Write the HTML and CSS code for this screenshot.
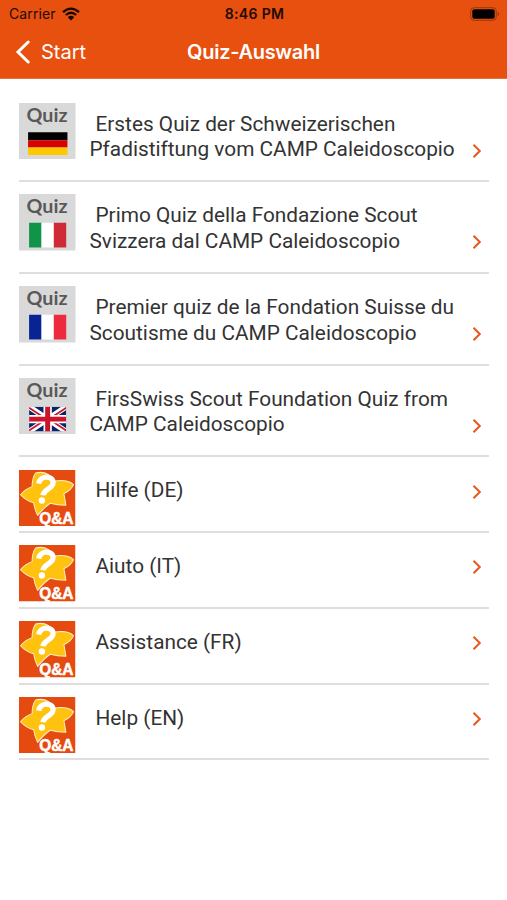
FILE: index.html
```html
<!DOCTYPE html>
<html lang="de">
<head>
<meta charset="utf-8">
<title>Quiz-Auswahl</title>
<link rel="stylesheet" href="styles.css">
</head>
<body>
<svg class="defs" aria-hidden="true">
  <symbol id="chevron" viewBox="0 0 10 16"><path d="M1.500 1.800 L7.800 8 L1.500 14.200" fill="none" stroke="#e8581c" stroke-width="2"/></symbol>
  <symbol id="qa" viewBox="0 0 56 56">
    <rect width="56" height="56" fill="#e54b10"/>
    <path d="M16.500 3 Q28 0 35.500 11 Q48 9 54 14.500 Q52 20 44.500 23.500 Q45.500 29 46.500 35 Q38 35 31 33 Q25 37 18.500 45 Q15.500 39 14.500 32.500 Q7 30.500 1.500 24.500 Q6 19 13 16.500 Q13 8 16.500 3Z" fill="#ffc20e" stroke="#fff0c4" stroke-width="1" stroke-linejoin="round"/>
    <path d="M19.500 13.500 C20.500 5 33.800 5 33.800 12.500 C33.800 19 24.500 18.500 23.800 25" fill="none" stroke="#fff" stroke-width="5.200"/>
    <circle cx="22.700" cy="30.300" r="3.200" fill="#fff"/>
  </symbol>
</svg>
<header class="top">
  <div class="status">
    <div class="carrier">Carrier
      <svg class="wifi" viewBox="0 0 18 14"><path d="M1 5.200 Q9 -2 17 5.200 M3.800 8 Q9 3.400 14.200 8" fill="none" stroke="currentColor" stroke-width="2.300"/><path d="M5.800 10.200 Q9 7.400 12.200 10.200 L9 13.500Z" fill="currentColor"/></svg>
    </div>
    <div class="clock">8:46 PM</div>
    <svg class="battery" viewBox="0 0 30 14"><rect x=".7" y=".7" width="25.600" height="12.600" rx="3.500" fill="none" stroke="#9b350d"/><rect x="2.300" y="2.300" width="22.400" height="9.400" rx="2" fill="#000"/><path d="M27.700 4.700 Q30.500 7 27.700 9.300Z" fill="#9b350d"/></svg>
  </div>
  <nav class="nav">
    <a class="back"><svg class="back-icon" viewBox="0 0 16 24"><path d="M13.200 2 L3 12 L13.200 22" fill="none" stroke="#fff" stroke-width="3" stroke-linecap="round"/></svg><span class="back-label">Start</span></a>
    <h1 class="title">Quiz-Auswahl</h1>
    <span></span>
  </nav>
</header>
<main class="list">
  <a class="row quiz">
    <svg class="thumb" viewBox="0 0 56 56"><rect width="56" height="56" fill="#d9d9d9"/><text class="quiz-label" x="7.500" y="18.700" textLength="40.500">Quiz</text><path fill="#000" d="M9 29h39v8H9z"/><path fill="#d90000" d="M9 37h39v7H9z"/><path fill="#ffc800" d="M9 44h39v7.500H9z"/></svg>
    <div class="label"><span class="line first">Erstes Quiz der Schweizerischen</span><span class="line">Pfadistiftung vom CAMP Caleidoscopio</span></div>
    <svg class="chev"><use href="#chevron"/></svg>
  </a>
  <a class="row quiz">
    <svg class="thumb" viewBox="0 0 56 56"><rect width="56" height="56" fill="#d9d9d9"/><text class="quiz-label" x="7.500" y="18.700" textLength="40.500">Quiz</text><path fill="#109447" d="M10 28.500h12.300v24.500H10z"/><path fill="#fff" d="M22.300 28.500h12.200v24.500H22.300z"/><path fill="#ce2b37" d="M34.500 28.500h12.300v24.500H34.500z"/></svg>
    <div class="label"><span class="line first">Primo Quiz della Fondazione Scout</span><span class="line">Svizzera dal CAMP Caleidoscopio</span></div>
    <svg class="chev"><use href="#chevron"/></svg>
  </a>
  <a class="row quiz">
    <svg class="thumb" viewBox="0 0 56 56"><rect width="56" height="56" fill="#d9d9d9"/><text class="quiz-label" x="7.500" y="18.700" textLength="40.500">Quiz</text><path fill="#082494" d="M10 28.500h12.300v24.500H10z"/><path fill="#fff" d="M22.300 28.500h12.200v24.500H22.300z"/><path fill="#ed2b3c" d="M34.500 28.500h12.300v24.500H34.500z"/></svg>
    <div class="label"><span class="line first">Premier quiz de la Fondation Suisse du</span><span class="line">Scoutisme du CAMP Caleidoscopio</span></div>
    <svg class="chev"><use href="#chevron"/></svg>
  </a>
  <a class="row quiz">
    <svg class="thumb" viewBox="0 0 56 56"><rect width="56" height="56" fill="#d9d9d9"/><text class="quiz-label" x="7.500" y="18.700" textLength="40.500">Quiz</text>
      <svg x="10" y="28.500" width="36.800" height="24.500" viewBox="0 0 60 40" preserveAspectRatio="none"><rect width="60" height="40" fill="#08246b"/><path d="M0 0L60 40M60 0L0 40" stroke="#fff" stroke-width="9"/><path d="M0 1.500L30 21.500M30 18.500L60 38.500M60 1.500L30 21.500M30 18.500L0 38.500" stroke="#cc142b" stroke-width="2.800"/><path d="M30 0V40M0 20H60" stroke="#fff" stroke-width="13.500"/><path d="M30 0V40M0 20H60" stroke="#cc142b" stroke-width="8"/></svg>
    </svg>
    <div class="label"><span class="line first">FirsSwiss Scout Foundation Quiz from</span><span class="line">CAMP Caleidoscopio</span></div>
    <svg class="chev"><use href="#chevron"/></svg>
  </a>
  <a class="row help"><svg class="thumb" viewBox="0 0 56 56"><use href="#qa"/><text class="qa-label" x="20" y="53.500" textLength="34" lengthAdjust="spacingAndGlyphs">Q&amp;A</text></svg><div class="label"><span class="line first">Hilfe (DE)</span></div><svg class="chev"><use href="#chevron"/></svg></a>
  <a class="row help"><svg class="thumb" viewBox="0 0 56 56"><use href="#qa"/><text class="qa-label" x="20" y="53.500" textLength="34" lengthAdjust="spacingAndGlyphs">Q&amp;A</text></svg><div class="label"><span class="line first">Aiuto (IT)</span></div><svg class="chev"><use href="#chevron"/></svg></a>
  <a class="row help"><svg class="thumb" viewBox="0 0 56 56"><use href="#qa"/><text class="qa-label" x="20" y="53.500" textLength="34" lengthAdjust="spacingAndGlyphs">Q&amp;A</text></svg><div class="label"><span class="line first">Assistance (FR)</span></div><svg class="chev"><use href="#chevron"/></svg></a>
  <a class="row help"><svg class="thumb" viewBox="0 0 56 56"><use href="#qa"/><text class="qa-label" x="20" y="53.500" textLength="34" lengthAdjust="spacingAndGlyphs">Q&amp;A</text></svg><div class="label"><span class="line first">Help (EN)</span></div><svg class="chev"><use href="#chevron"/></svg></a>
</main>
</body>
</html>
```
FILE: styles.css
```css
* { box-sizing: border-box; }
body { margin: 0; background: #fff; font-family: Roboto, sans-serif; color: #333; }
.defs { display: block; width: 0; height: 0; }
.top { height: 79px; background: #e8500f; border-bottom: 1px solid #e9733f; font-family: Inter, sans-serif; }
.status { display: grid; grid-template-columns: 1fr auto 1fr; align-items: center; height: 27px; padding: 0 7px 0 9px; color: #210b02; }
.carrier { display: flex; align-items: center; gap: 6px; font-size: 14px; letter-spacing: 0.1px; }
.wifi { width: 18px; height: 14px; color: #160600; }
.clock { font-size: 14px; font-weight: 600; letter-spacing: 0.35px; }
.battery { width: 30px; height: 14px; justify-self: end; }
.nav { display: grid; grid-template-columns: 1fr auto 1fr; align-items: center; height: 50px; padding: 0 15px; color: #fff; }
.back { display: flex; align-items: center; gap: 10px; font-size: 20px; line-height: 30px; }
.back-icon { width: 16px; height: 24px; }
.title { margin: 0; font-size: 20px; line-height: 30px; font-weight: 600; letter-spacing: -0.3px; }
.list { padding: 11.500px 18px 0 19px; }
.row { display: flex; align-items: flex-start; padding-top: 12.300px; border-bottom: 2px solid #dedede; }
.quiz { height: 91.700px; }
.help { height: 75.800px; }
.thumb { width: 56.500px; height: 56.500px; flex: none; }
.quiz-label { font: 700 19.500px Lato, sans-serif; fill: #595959; }
.qa-label { font: 700 16px "Liberation Sans", sans-serif; fill: #fff; stroke: #fff; stroke-width: 0.5px; }
.label { flex: 1; padding: 8.800px 0 0 14px; font-size: 20.800px; line-height: 25.700px; white-space: nowrap; }
.line { display: block; }
.first { padding-left: 6px; }
.chev { width: 10px; height: 16px; flex: none; margin: 40px 7px 0 0; }
.help .chev { margin-top: 14px; }
```
